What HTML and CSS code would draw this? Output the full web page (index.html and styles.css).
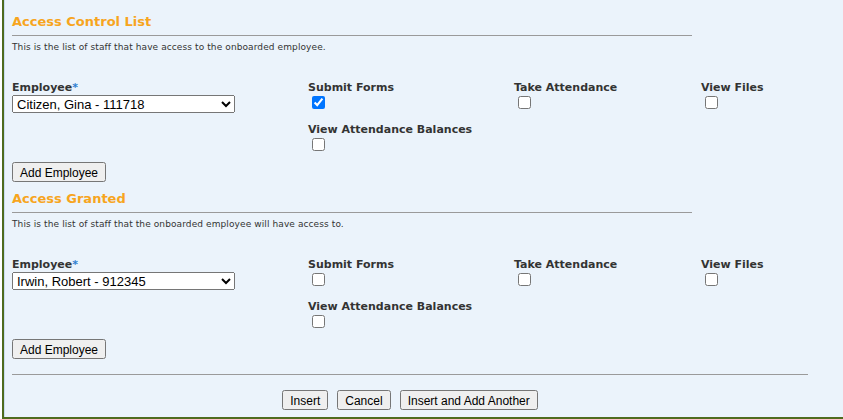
FILE: index.html
```html
<!DOCTYPE html>
<html lang="en">
<head>
    <meta charset="UTF-8">
    <title>Onboarding - Access</title>
    <link rel="stylesheet" href="styles.css">
</head>
<body>
    <div class="panel">
        <div class="section">
            <h2 class="section-title">Access Control List</h2>
            <p class="section-desc">This is the list of staff that have access to the onboarded employee.</p>
            <div class="acl-grid">
                <div class="field">
                    <label>Employee<span class="req">*</span></label>
                    <select class="emp-select">
                        <option>Citizen, Gina - 111718</option>
                    </select>
                </div>
                <div class="field">
                    <label>Submit Forms</label>
                    <input type="checkbox" checked>
                </div>
                <div class="field">
                    <label>Take Attendance</label>
                    <input type="checkbox">
                </div>
                <div class="field">
                    <label>View Files</label>
                    <input type="checkbox">
                </div>
                <div class="field col-2">
                    <label>View Attendance Balances</label>
                    <input type="checkbox">
                </div>
            </div>
            <button type="button" class="btn btn-add">Add Employee</button>
        </div>

        <div class="section">
            <h2 class="section-title">Access Granted</h2>
            <p class="section-desc">This is the list of staff that the onboarded employee will have access to.</p>
            <div class="acl-grid">
                <div class="field">
                    <label>Employee<span class="req">*</span></label>
                    <select class="emp-select">
                        <option>Irwin, Robert - 912345</option>
                    </select>
                </div>
                <div class="field">
                    <label>Submit Forms</label>
                    <input type="checkbox">
                </div>
                <div class="field">
                    <label>Take Attendance</label>
                    <input type="checkbox">
                </div>
                <div class="field">
                    <label>View Files</label>
                    <input type="checkbox">
                </div>
                <div class="field col-2">
                    <label>View Attendance Balances</label>
                    <input type="checkbox">
                </div>
            </div>
            <button type="button" class="btn btn-add">Add Employee</button>
        </div>

        <div class="form-actions">
            <button type="submit" class="btn">Insert</button>
            <button type="button" class="btn">Cancel</button>
            <button type="submit" class="btn">Insert and Add Another</button>
        </div>
    </div>
</body>
</html>
```

FILE: styles.css
```css
* {
    margin: 0;
    padding: 0;
    box-sizing: border-box;
}

html, body {
    height: 100%;
}

body {
    background: #ffffff;
    font-family: 'DejaVu Sans', Verdana, sans-serif;
    color: #333;
    padding-left: 2px;
    overflow: hidden;
}

.panel {
    height: 419px;
    background: #ebf3fb;
    border-left: 2px solid #4f6b1e;
    border-bottom: 2px solid #4f6b1e;
    box-shadow: inset 1px 0 0 #c9dcef;
    padding: 5px 0 0 8px;
    width: 841px;
}

.section-title {
    color: #f7a51e;
    font-size: 13px;
    font-weight: bold;
    padding-top: 9px;
    line-height: 16px;
    width: 680px;
    border-bottom: 1px solid #9a9a9a;
    padding-bottom: 5px;
}

.section-desc {
    font-size: 9px;
    line-height: 12px;
    padding-top: 5px;
    letter-spacing: 0.1px;
    color: #333;
}

.acl-grid {
    display: grid;
    grid-template-columns: 296px 206px 187px 1fr;
    row-gap: 10px;
    margin-top: 28px;
}

.field label {
    display: block;
    font-size: 11px;
    font-weight: bold;
    line-height: 13px;
    color: #333;
}

.req {
    color: #2f7fd0;
}

.field input[type="checkbox"] {
    display: block;
    margin: 2px 3px 3px 4px;
}

.col-2 {
    grid-column: 2;
}

.emp-select {
    display: block;
    width: 223px;
    height: 18px;
    font-family: 'Liberation Sans', Arial, sans-serif;
    font-size: 13px;
    margin-top: 1px;
}

.btn {
    font-family: 'Liberation Sans', Arial, sans-serif;
    font-size: 12px;
    padding: 2px 6px;
    height: 20px;
}

.btn-add {
    display: block;
    margin-top: 8px;
}

.form-actions {
    width: 796px;
    border-top: 1px solid #9a9a9a;
    margin-top: 15px;
    padding-top: 15px;
    display: flex;
    justify-content: center;
    gap: 9px;
}
```
